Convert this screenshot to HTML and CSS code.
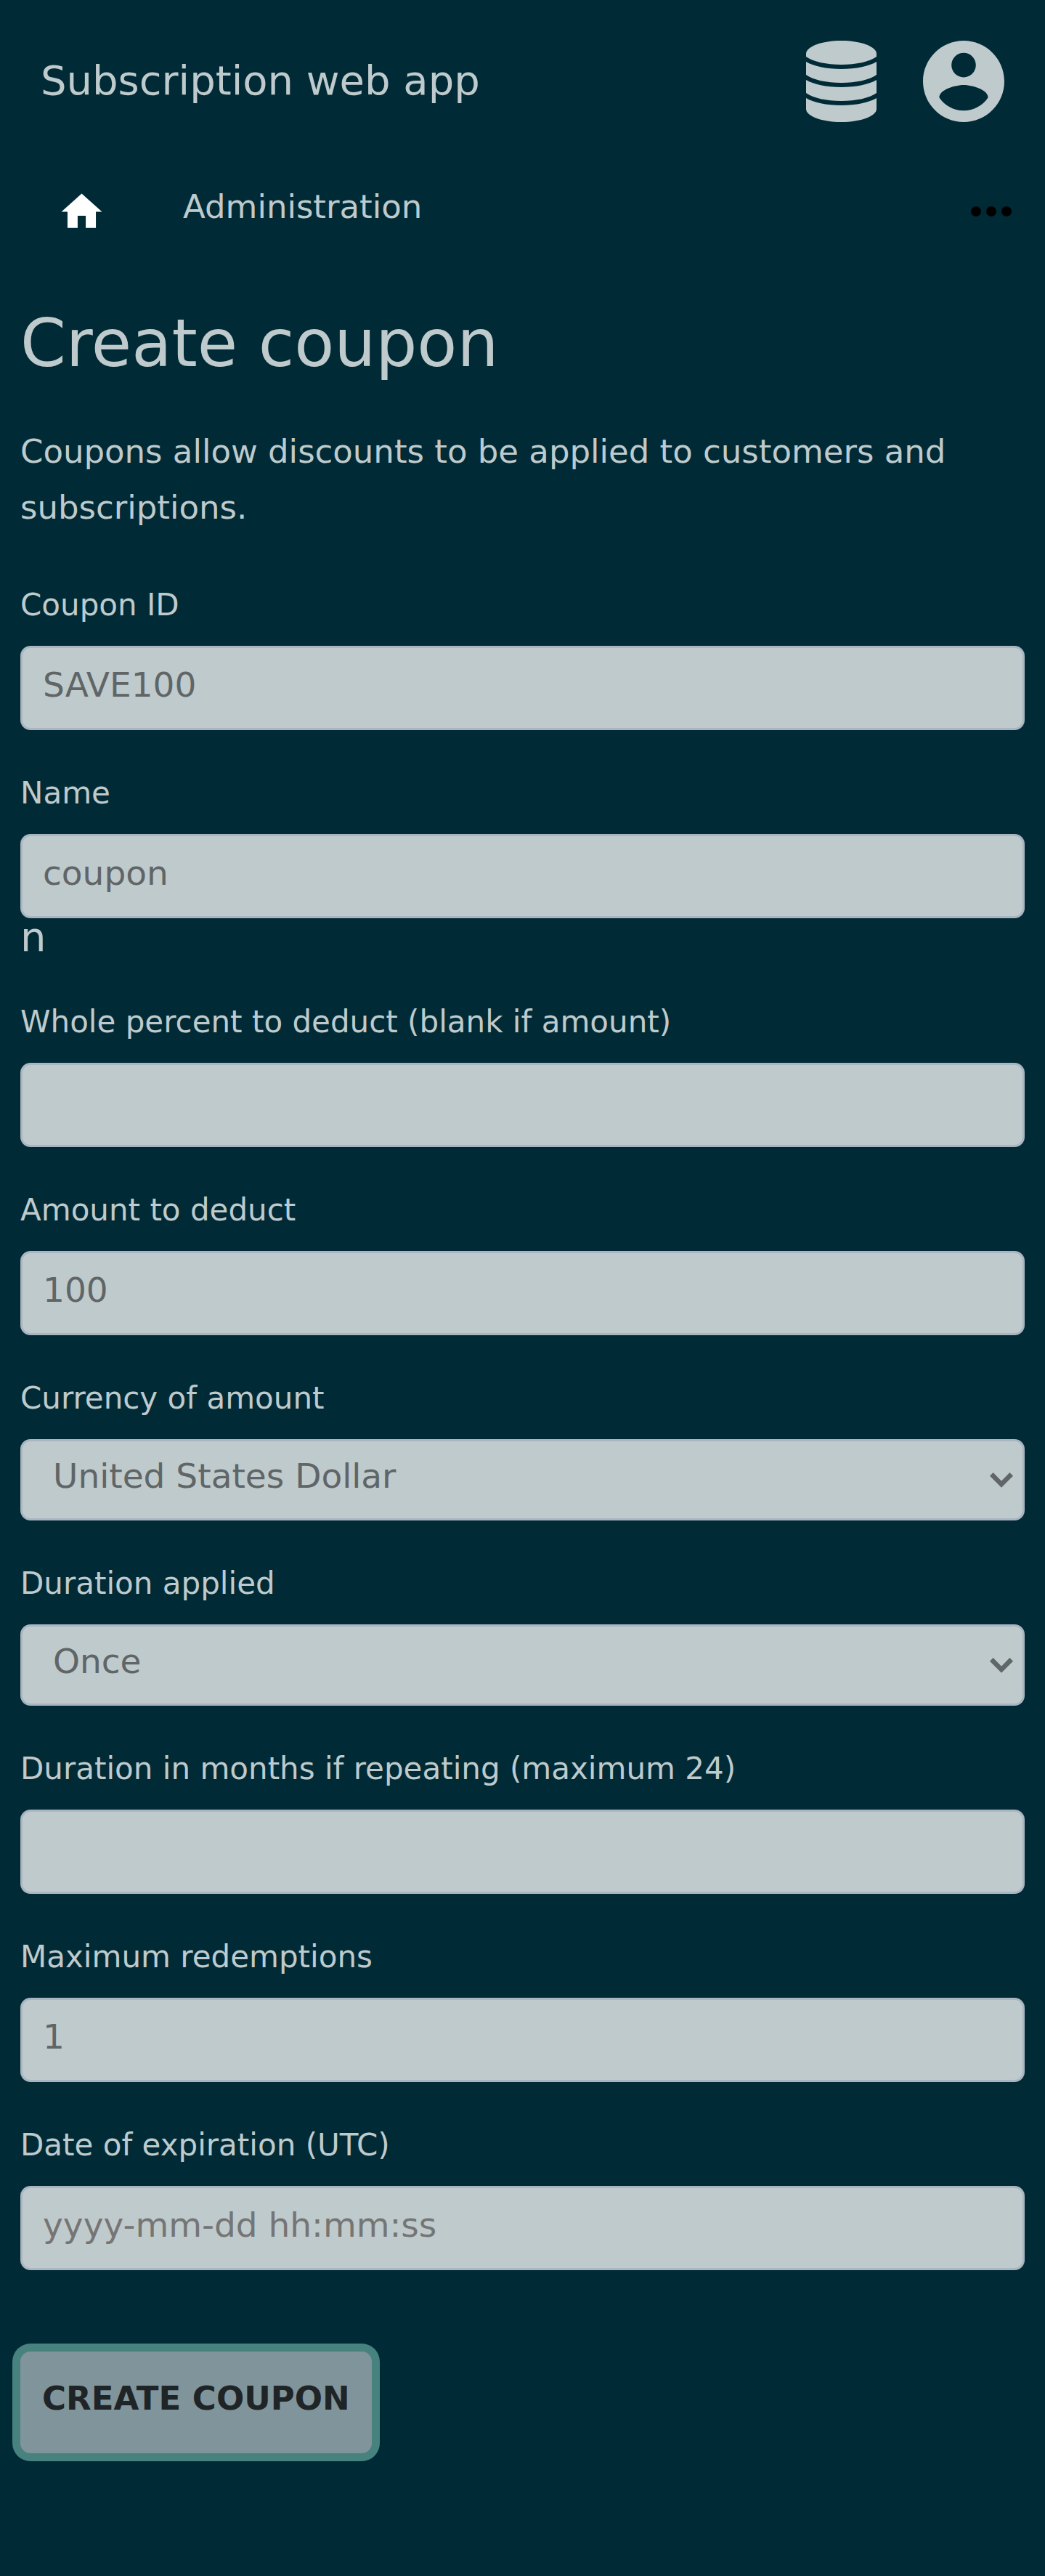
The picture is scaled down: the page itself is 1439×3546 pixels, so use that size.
FILE: index.html
```html
<!DOCTYPE html>
<html lang="en">
<head>
<meta charset="utf-8">
<title>Create coupon</title>
<meta name="viewport" content="width=device-width, initial-scale=1">
<link rel="stylesheet" href="styles.css">
</head>
<body>
<header class="header">
  <a class="brand" href="#">Subscription web app</a>
  <div class="menus">
    <a class="menu-link" href="#" aria-label="Administrator menu">
      <svg class="icon-database" viewBox="0 0 97 112" aria-hidden="true">
        <path d="M0 18C0 8 22 0 48.500 0S97 8 97 18V22C87 29 69 33 48.500 33S10 29 0 22Z"/>
        <path d="M0 29C10 35 28 39 48.500 39S87 35 97 29V47C87 54 69 58 48.500 58S10 54 0 47Z"/>
        <path d="M0 54C10 60 28 64 48.500 64S87 60 97 54V72C87 79 69 83 48.500 83S10 79 0 72Z"/>
        <path d="M0 79C10 85 28 89 48.500 89S87 85 97 79V94C97 104 75 112 48.500 112S0 104 0 94Z"/>
      </svg>
    </a>
    <a class="menu-link" href="#" aria-label="Account menu">
      <svg class="icon-account" viewBox="2 2 20 20" aria-hidden="true">
        <path d="M12 2C6.480 2 2 6.480 2 12s4.480 10 10 10 10-4.480 10-10S17.520 2 12 2zm0 3c1.660 0 3 1.340 3 3s-1.340 3-3 3-3-1.340-3-3 1.340-3 3-3zm0 14.200c-2.500 0-4.710-1.280-6-3.220.03-1.990 4-3.080 6-3.080 1.990 0 5.970 1.090 6 3.080-1.290 1.940-3.500 3.220-6 3.220z"/>
      </svg>
    </a>
  </div>
</header>
<nav class="nav">
  <a class="nav-home" href="#" aria-label="Home">
    <svg class="icon-home" viewBox="0 0 24 24" aria-hidden="true"><path d="M10 20v-6h4v6h5v-8h3L12 3 2 12h3v8z"/></svg>
  </a>
  <a class="nav-text" href="#">Administration</a>
  <button class="nav-more" type="button" aria-label="More">
    <svg class="icon-more" viewBox="0 0 56 14" aria-hidden="true"><circle cx="7" cy="7" r="7"/><circle cx="28" cy="7" r="7"/><circle cx="49" cy="7" r="7"/></svg>
  </button>
</nav>
<main class="main">
  <h1 class="title">Create coupon</h1>
  <p class="intro">Coupons allow discounts to be applied to customers and subscriptions.</p>
  <form class="form">
    <div class="field">
      <label class="label" for="couponid">Coupon ID</label>
      <input class="input" id="couponid" type="text" value="SAVE100">
    </div>
    <div class="field">
      <label class="label" for="name">Name</label>
      <input class="input" id="name" type="text" value="coupon">
      <span class="stray">n</span>
    </div>
    <div class="field">
      <label class="label" for="percent_off">Whole percent to deduct (blank if amount)</label>
      <input class="input" id="percent_off" type="text">
    </div>
    <div class="field">
      <label class="label" for="amount_off">Amount to deduct</label>
      <input class="input" id="amount_off" type="text" value="100">
    </div>
    <div class="field">
      <label class="label" for="currency">Currency of amount</label>
      <div class="select-wrap">
        <select class="select" id="currency"><option>United States Dollar</option></select>
        <svg class="icon-chevron" viewBox="0 0 32 21" aria-hidden="true"><path d="M2.300 2.400 16 16.200 29.700 2.400"/></svg>
      </div>
    </div>
    <div class="field">
      <label class="label" for="duration">Duration applied</label>
      <div class="select-wrap">
        <select class="select" id="duration"><option>Once</option><option>Repeating</option><option>Forever</option></select>
        <svg class="icon-chevron" viewBox="0 0 32 21" aria-hidden="true"><path d="M2.300 2.400 16 16.200 29.700 2.400"/></svg>
      </div>
    </div>
    <div class="field">
      <label class="label" for="duration_in_months">Duration in months if repeating (maximum 24)</label>
      <input class="input" id="duration_in_months" type="text">
    </div>
    <div class="field">
      <label class="label" for="max_redemptions">Maximum redemptions</label>
      <input class="input" id="max_redemptions" type="text" value="1">
    </div>
    <div class="field">
      <label class="label" for="expires">Date of expiration (UTC)</label>
      <input class="input" id="expires" type="text" placeholder="yyyy-mm-dd hh:mm:ss">
    </div>
    <button class="submit" type="submit">CREATE COUPON</button>
  </form>
</main>
</body>
</html>
```

FILE: styles.css
```css
* {
  box-sizing: border-box;
}

body {
  margin: 0;
  background: #002b36;
  color: #bfcacc;
  font-family: "DejaVu Sans", sans-serif;
  font-size: 56px;
}

a {
  color: inherit;
  text-decoration: none;
}

svg {
  display: block;
  fill: currentColor;
}

.header {
  display: flex;
  align-items: center;
  justify-content: space-between;
  padding: 56px;
}

.brand {
  padding-bottom: 4px;
  line-height: 65px;
}

.menus {
  display: flex;
  gap: 64px;
}

.icon-database {
  width: 97px;
  height: 112px;
}

.icon-account {
  width: 112px;
  height: 112px;
}

.nav {
  display: flex;
  align-items: center;
  padding: 28px 46px 0 79px;
}

.nav-home {
  color: #fff;
  margin-right: 106px;
}

.icon-home {
  width: 67px;
  height: 67px;
}

.nav-text {
  padding-bottom: 12px;
  font-size: 45px;
  line-height: 66px;
}

.nav-more {
  margin-left: auto;
  padding: 0;
  border: 0;
  background: none;
  color: #000;
}

.icon-more {
  width: 56px;
  height: 14px;
}

.main {
  padding: 89px 28px 168px;
}

.title {
  margin: 0 0 56px;
  font-size: 90px;
  font-weight: 400;
  line-height: 108px;
}

.intro {
  margin: 0 0 64px;
  font-size: 45px;
  line-height: 77px;
}

.form {
  display: flex;
  flex-direction: column;
  align-items: stretch;
  gap: 55px;
}

.field {
  display: flex;
  flex-direction: column;
}

.label {
  margin-bottom: 25px;
  font-size: 42px;
  line-height: 63px;
}

.input,
.select {
  width: 100%;
  margin: 0;
  border: 3px solid #a9b5c1;
  border-radius: 14px;
  background: #bfcacc;
  color: #606567;
  font-family: inherit;
  font-size: 47px;
  line-height: 55px;
}

.input {
  height: 116px;
  padding: 23px 28px 32px;
}

.input::placeholder {
  color: #757575;
  opacity: 1;
}

.select-wrap {
  display: grid;
  align-items: center;
}

.select-wrap > * {
  grid-area: 1 / 1;
}

.select {
  height: 112px;
  padding: 20px 56px 31px 42px;
  appearance: none;
}

.icon-chevron {
  justify-self: end;
  width: 32px;
  height: 21px;
  margin-right: 16px;
  fill: none;
  stroke: #606567;
  stroke-width: 6.5;
  pointer-events: none;
}

.stray {
  padding-bottom: 4px;
  line-height: 52px;
}

.submit {
  align-self: flex-start;
  margin-top: 57px;
  padding: 39px 30px 49px;
  border: 0;
  border-radius: 14px;
  background: #80949b;
  box-shadow: 0 0 0 11px #48827f;
  color: #1f2426;
  font-family: inherit;
  font-size: 45px;
  font-weight: 700;
  line-height: 52px;
}
```
